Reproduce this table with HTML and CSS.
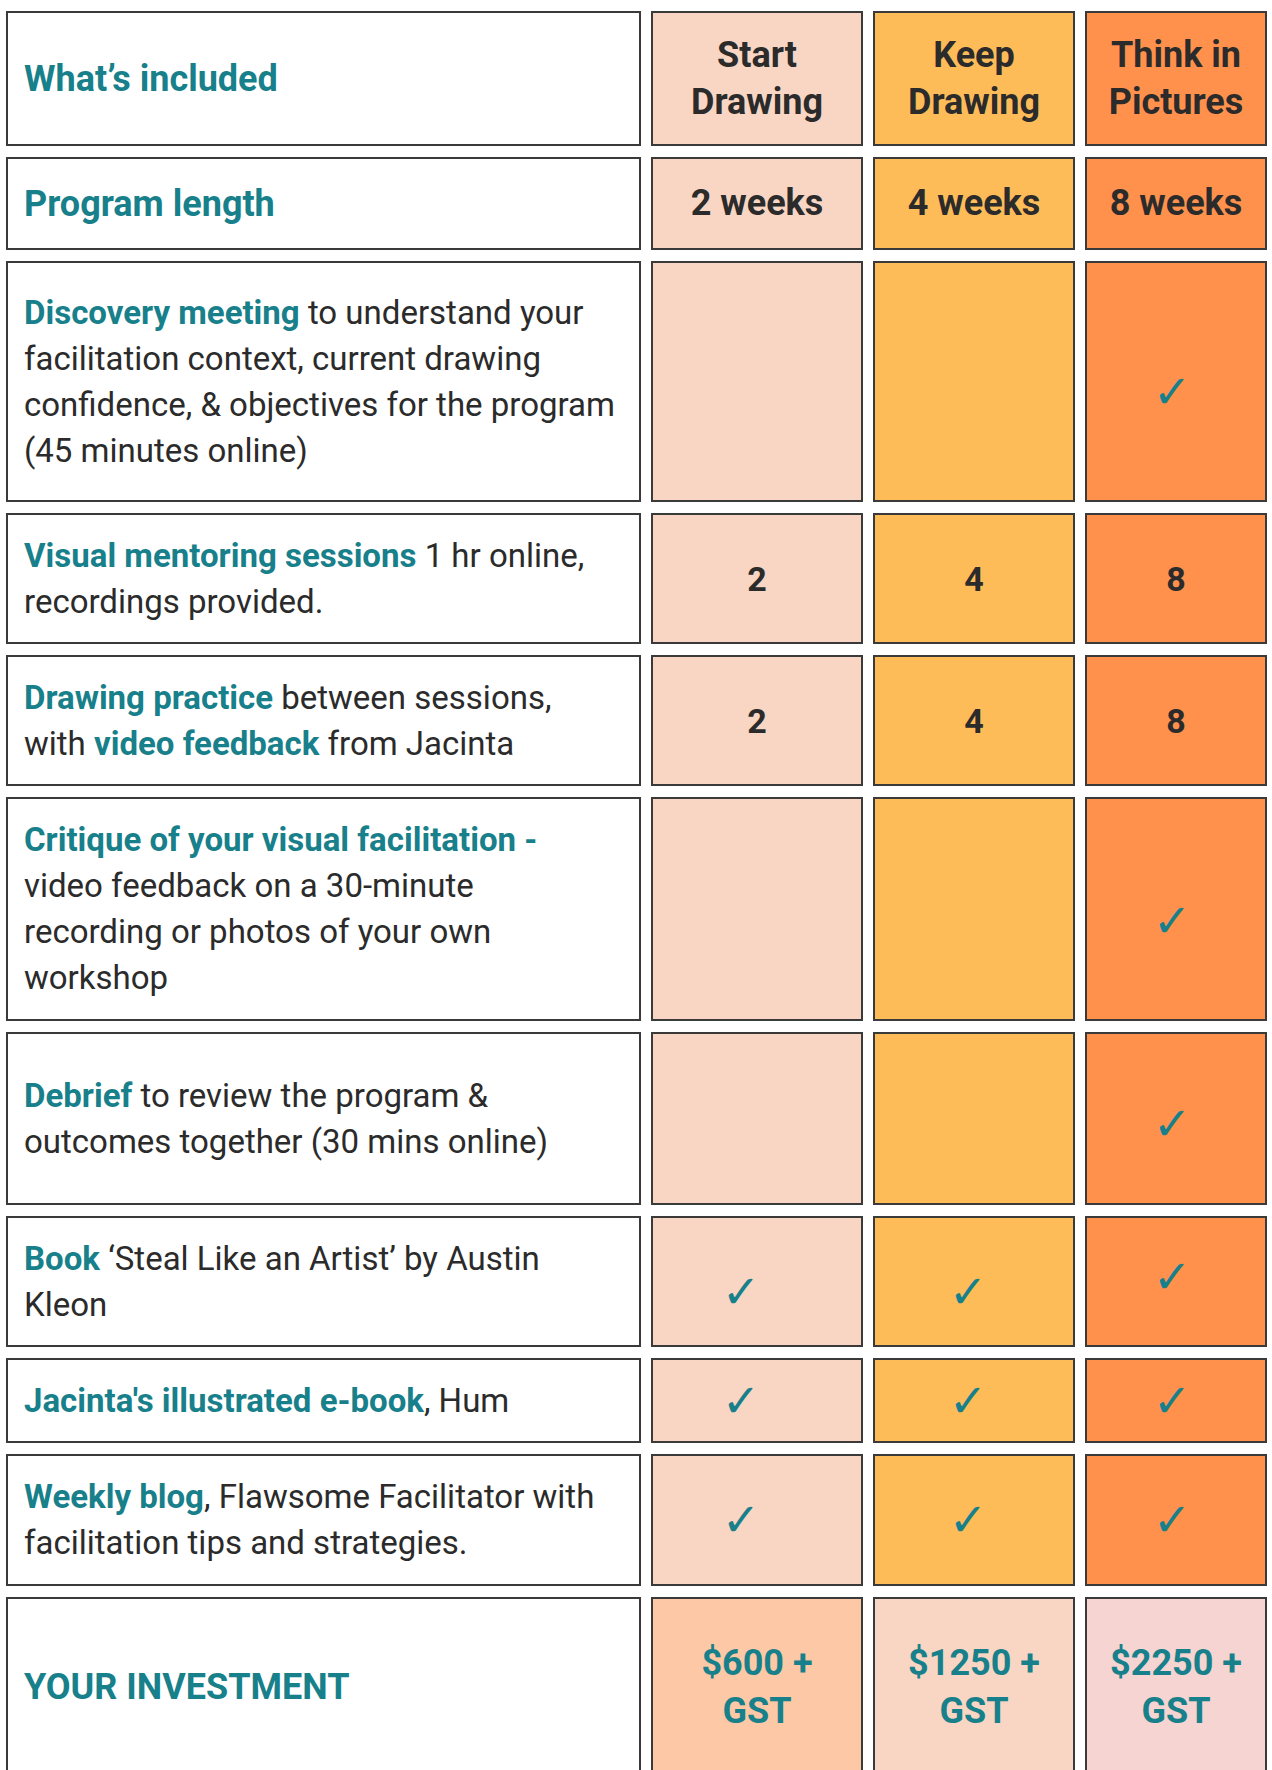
FILE: index.html
```html
<!DOCTYPE html>
<html lang="en">
<head>
<meta charset="utf-8">
<title>Programs</title>
<link rel="stylesheet" href="styles.css">
</head>
<body>
<div class="table">
  <div class="cell label big"><span class="hl">What’s included</span></div>
  <div class="cell c1 head">Start<br>Drawing</div>
  <div class="cell c2 head">Keep<br>Drawing</div>
  <div class="cell c3 head">Think in<br>Pictures</div>

  <div class="cell label big"><span class="hl">Program length</span></div>
  <div class="cell c1 head">2 weeks</div>
  <div class="cell c2 head">4 weeks</div>
  <div class="cell c3 head">8 weeks</div>

  <div class="cell label"><p><span class="hl">Discovery meeting</span> to understand your facilitation context, current drawing confidence, &amp; objectives for the program (45 minutes online)</p></div>
  <div class="cell c1"></div>
  <div class="cell c2"></div>
  <div class="cell c3 ck low">✓</div>

  <div class="cell label"><p><span class="hl">Visual mentoring sessions</span> 1 hr online, recordings provided.</p></div>
  <div class="cell c1 num">2</div>
  <div class="cell c2 num">4</div>
  <div class="cell c3 num">8</div>

  <div class="cell label"><p><span class="hl">Drawing practice</span> between sessions, with <span class="hl">video feedback</span> from Jacinta</p></div>
  <div class="cell c1 num">2</div>
  <div class="cell c2 num">4</div>
  <div class="cell c3 num">8</div>

  <div class="cell label"><p><span class="hl">Critique of your visual facilitation -</span> video feedback on a 30-minute recording or photos of your own workshop</p></div>
  <div class="cell c1"></div>
  <div class="cell c2"></div>
  <div class="cell c3 ck lower">✓</div>

  <div class="cell label"><p><span class="hl">Debrief</span> to review the program &amp; outcomes together (30 mins online)</p></div>
  <div class="cell c1"></div>
  <div class="cell c2"></div>
  <div class="cell c3 ck slight">✓</div>

  <div class="cell label"><p><span class="hl">Book</span> ‘Steal Like an Artist’ by Austin Kleon</p></div>
  <div class="cell c1 ck low">✓</div>
  <div class="cell c2 ck low">✓</div>
  <div class="cell c3 ck high">✓</div>

  <div class="cell label"><p><span class="hl">Jacinta's illustrated e-book</span>, Hum</p></div>
  <div class="cell c1 ck">✓</div>
  <div class="cell c2 ck">✓</div>
  <div class="cell c3 ck">✓</div>

  <div class="cell label"><p><span class="hl">Weekly blog</span>, Flawsome Facilitator with facilitation tips and strategies.</p></div>
  <div class="cell c1 ck">✓</div>
  <div class="cell c2 ck">✓</div>
  <div class="cell c3 ck">✓</div>

  <div class="cell label big"><span class="hl">YOUR INVESTMENT</span></div>
  <div class="cell p1 price">$600 +<br>GST</div>
  <div class="cell p2 price">$1250 +<br>GST</div>
  <div class="cell p3 price">$2250 +<br>GST</div>
</div>
</body>
</html>
```

FILE: styles.css
```css
html, body {
  margin: 0;
  padding: 0;
  background: #ffffff;
}

body {
  font-family: Roboto, "Liberation Sans", Arial, sans-serif;
  color: #2b2b2b;
  font-size: 33px;
  line-height: 46px;
  overflow: hidden;
}

.table {
  display: grid;
  grid-template-columns: 635px 212px 202px 182px;
  grid-template-rows: 135px 93px 241px 131px 131px 224px 173px 131px 85px 132px 180px;
  column-gap: 10px;
  row-gap: 11px;
  padding: 11px 5px 0 6px;
}

.cell {
  box-sizing: border-box;
  border: 2px solid #3a3a3a;
  display: flex;
  align-items: center;
  justify-content: center;
  text-align: center;
}

.label {
  background: #ffffff;
  justify-content: flex-start;
  text-align: left;
  padding: 0 23px 0 16px;
}

.label p {
  margin: 0;
}

.label.big {
  font-size: 36px;
}

.hl {
  color: #17808a;
  font-weight: 700;
}

.c1 { background: #f9d6c3; }
.c2 { background: #febc59; }
.c3 { background: #ff914d; }

.p1 { background: #fdc8a5; }
.p2 { background: #f9d6c3; }
.p3 { background: #f5d4d1; }

.head {
  font-weight: 700;
  font-size: 36px;
  line-height: 47px;
}

.num {
  font-weight: 700;
  font-size: 34px;
}

.price {
  color: #17808a;
  font-weight: 700;
  font-size: 36px;
  line-height: 48px;
}

.ck {
  font-family: "DejaVu Sans", sans-serif;
  color: #17808a;
  font-size: 46px;
  line-height: 50px;
}

.c1.ck { padding-right: 32px; }
.c2.ck { padding-right: 12px; }
.c3.ck { padding-right: 8px; }

.ck.low { padding-top: 20px; }
.ck.lower { padding-top: 24px; }
.ck.slight { padding-top: 10px; }
.ck.high { padding-bottom: 10px; }
```
